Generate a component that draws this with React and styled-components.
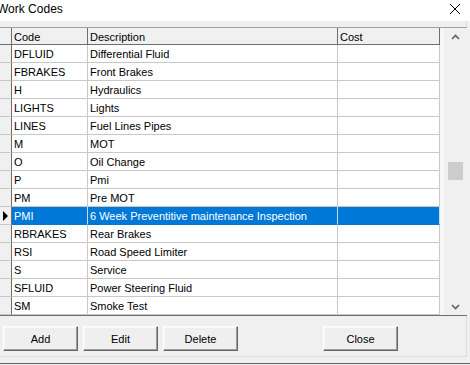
import React from "react";
import styled, { createGlobalStyle } from "styled-components";

const Global = createGlobalStyle`
  html, body { margin: 0; padding: 0; background: #f0f0f0; }
  body { font-family: "Liberation Sans", Arial, sans-serif; font-size: 11px; color: #000; }
`;

const Window = styled.div`
  width: 470px;
  height: 365px;
  background: #f0f0f0;
  overflow: hidden;
  display: flex;
  flex-direction: column;
`;

const TitleBar = styled.div`
  height: 21px;
  background: #fff;
  display: flex;
  align-items: center;
  justify-content: space-between;
  flex: none;
`;

const Title = styled.div`
  font-size: 12px;
  margin-left: -3px;
  margin-top: -4px;
  color: #000;
`;

const CloseIcon = styled.svg`
  width: 12px;
  height: 12px;
  margin-right: 9px;
  margin-top: -4px;
`;

const Body = styled.div`
  width: 467px;
  height: 336px;
  padding-top: 6px;
  box-sizing: border-box;
  border-right: 1px solid #dcdcdc;
  border-bottom: 1px solid #dcdcdc;
  display: flex;
  flex-direction: column;
  flex: none;
`;

const GridFrame = styled.div`
  display: flex;
  border-top: 1px solid #a0a0a0;
  border-bottom: 1px solid #6d6d6d;
  width: 467px;
  background: #f7f7f7;
`;

const Table = styled.div`
  display: grid;
  grid-template-columns: 12px 76px 250px 102px;
  width: 440px;
  flex: none;
`;

const HeadCell = styled.div`
  height: 15px;
  padding-top: 1px;
  line-height: 16px;
  padding-left: ${(p) => (p.$pad ? "2px" : "0")};
  background: #f0f0f0;
  border-right: 1px solid #6d6d6d;
  border-bottom: 1px solid #6d6d6d;
  white-space: nowrap;
  overflow: hidden;
`;

const Indicator = styled.div`
  height: 17px;
  background: #f0f0f0;
  border-right: 1px solid #6d6d6d;
  border-bottom: 1px solid #c8c8c8;
  display: flex;
  align-items: center;
  justify-content: center;
`;

const Cell = styled.div`
  height: 16px;
  padding-top: 1px;
  line-height: 17px;
  padding-left: 2px;
  background: ${(p) => (p.$sel ? "#0078d7" : "#fff")};
  color: ${(p) => (p.$sel ? "#fff" : "#000")};
  border-right: 1px solid ${(p) => (p.$sel ? "#c4dcf2" : "#c8c8c8")};
  border-bottom: 1px solid ${(p) => (p.$sel ? "#0078d7" : "#c8c8c8")};
  white-space: nowrap;
  overflow: hidden;
`;

const Arrow = styled.div`
  width: 0;
  height: 0;
  border-top: 5px solid transparent;
  border-bottom: 5px solid transparent;
  border-left: 5px solid #000;
`;

const Gap = styled.div`
  width: 4px;
  flex: none;
`;

const ScrollBar = styled.div`
  width: 23px;
  flex: none;
  background: #f0f0f0;
  display: flex;
  flex-direction: column;
  align-items: center;
`;

const ScrollBtn = styled.div`
  height: 17px;
  width: 100%;
  display: flex;
  align-items: center;
  justify-content: center;
`;

const Track = styled.div`
  flex: 1;
  width: 100%;
  display: flex;
  flex-direction: column;
  align-items: center;
`;

const Thumb = styled.div`
  width: 15px;
  height: 18px;
  margin-top: 117px;
  background: #cdcdcd;
`;

const ButtonBar = styled.div`
  display: flex;
  gap: 5px;
  padding: 10px 0 0 3px;
`;

const Button = styled.button`
  width: 75px;
  height: 25px;
  padding: 0;
  margin-left: ${(p) => (p.$push ? "80px" : "0")};
  font-family: "Liberation Sans", Arial, sans-serif;
  font-size: 11px;
  color: #000;
  background: #efefef;
  border: 1px solid;
  border-color: #fff #646464 #646464 #fff;
  box-shadow: inset -1px -1px #a0a0a0, inset 1px 1px #f8f8f8;
`;

const BottomEdge = styled.div`
  margin-top: 6px;
  height: 1px;
  background: #646464;
  flex: none;
`;

const rows = [
  ["DFLUID", "Differential Fluid"],
  ["FBRAKES", "Front Brakes"],
  ["H", "Hydraulics"],
  ["LIGHTS", "Lights"],
  ["LINES", "Fuel Lines Pipes"],
  ["M", "MOT"],
  ["O", "Oil Change"],
  ["P", "Pmi"],
  ["PM", "Pre MOT"],
  ["PMI", "6 Week Preventitive maintenance Inspection"],
  ["RBRAKES", "Rear Brakes"],
  ["RSI", "Road Speed Limiter"],
  ["S", "Service"],
  ["SFLUID", "Power Steering Fluid"],
  ["SM", "Smoke Test"],
];

export default function App() {
  return (
    <>
      <Global />
      <Window>
        <TitleBar>
          <Title>Work Codes</Title>
          <CloseIcon viewBox="0 0 12 12">
            <path d="M1 1 L11 11 M11 1 L1 11" stroke="#000" strokeWidth="1" fill="none" />
          </CloseIcon>
        </TitleBar>
        <Body>
          <GridFrame>
            <Table>
              <HeadCell />
              <HeadCell $pad>Code</HeadCell>
              <HeadCell $pad>Description</HeadCell>
              <HeadCell $pad>Cost</HeadCell>
              {rows.map(([code, desc]) => {
                const sel = code === "PMI";
                return (
                  <React.Fragment key={code}>
                    <Indicator>{sel && <Arrow />}</Indicator>
                    <Cell $sel={sel}>{code}</Cell>
                    <Cell $sel={sel}>{desc}</Cell>
                    <Cell $sel={sel}></Cell>
                  </React.Fragment>
                );
              })}
            </Table>
            <Gap />
            <ScrollBar>
              <ScrollBtn>
                <svg width="9" height="6" viewBox="0 0 9 6">
                  <path d="M1 5 L4.5 1.5 L8 5" stroke="#606060" strokeWidth="1.6" fill="none" />
                </svg>
              </ScrollBtn>
              <Track>
                <Thumb />
              </Track>
              <ScrollBtn>
                <svg width="9" height="6" viewBox="0 0 9 6">
                  <path d="M1 1 L4.5 4.5 L8 1" stroke="#606060" strokeWidth="1.6" fill="none" />
                </svg>
              </ScrollBtn>
            </ScrollBar>
          </GridFrame>
          <ButtonBar>
            <Button>Add</Button>
            <Button>Edit</Button>
            <Button>Delete</Button>
            <Button $push>Close</Button>
          </ButtonBar>
        </Body>
        <BottomEdge />
      </Window>
    </>
  );
}
